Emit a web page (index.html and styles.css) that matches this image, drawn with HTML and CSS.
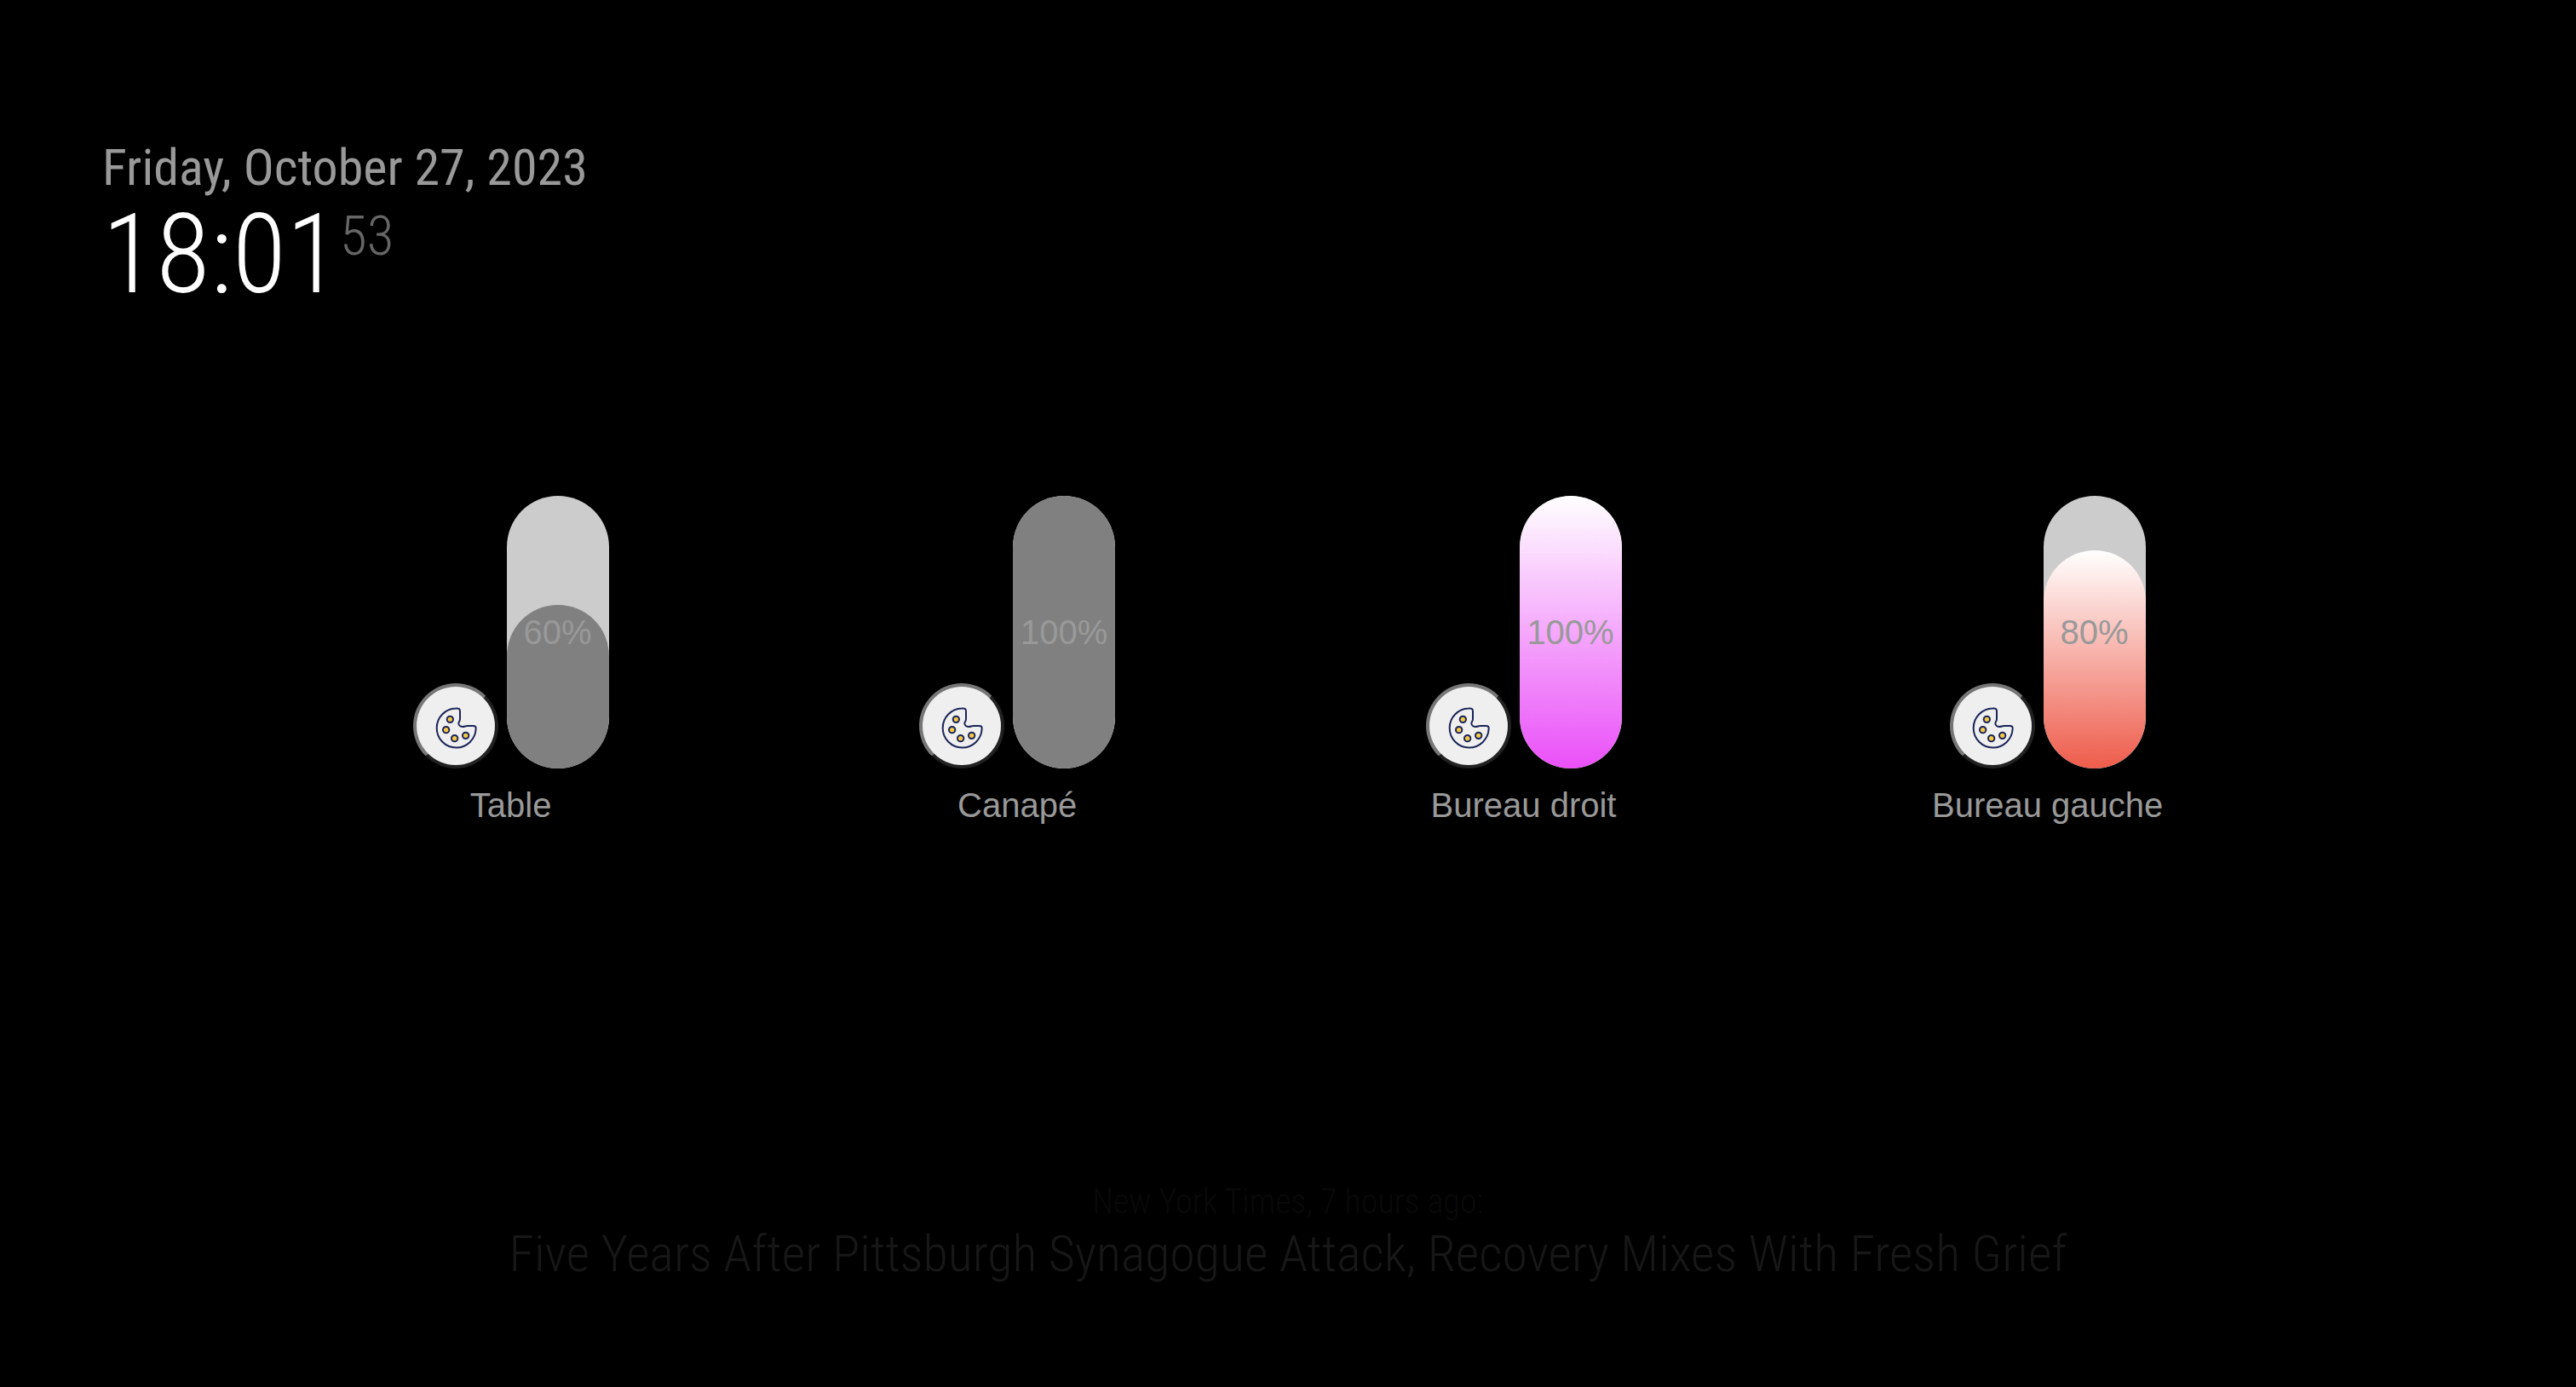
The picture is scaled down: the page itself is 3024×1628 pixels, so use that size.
FILE: index.html
```
<!DOCTYPE html>
<html lang="en">
<head>
<meta charset="utf-8">
<meta name="viewport" content="width=device-width, initial-scale=1">
<title>Mirror</title>
<link rel="stylesheet" href="styles.css">
</head>
<body>
<svg class="defs" aria-hidden="true">
  <symbol id="palette" viewBox="84 89 162 162">
    <path class="palette-body" d="M165 108.500A69 69 0 1 0 236 180C237 173 233 170 227 170H206C199 170 197 173 190 173C182 173 175 168 175 161C175 155 180 154 180 147V119C180 110 175 107 165 108.500Z"/>
    <circle class="palette-dot" cx="145" cy="147" r="11"/>
    <circle class="palette-dot" cx="131" cy="184" r="11"/>
    <circle class="palette-dot" cx="161" cy="214" r="11"/>
    <circle class="palette-dot" cx="200" cy="204" r="11"/>
  </symbol>
</svg>
<header class="clock">
  <div class="date">Friday, October 27, 2023</div>
  <div class="time">18:01<sup class="seconds">53</sup></div>
</header>
<main class="lights">
  <section class="light">
    <div class="controls">
      <button class="color-button" type="button" aria-label="Table color"><svg class="icon"><use href="#palette"/></svg></button>
      <div class="slider">
        <div class="fill off" style="height:60%"></div>
        <output class="percent" for="table">60%</output>
        <input class="range" id="table" type="range" min="0" max="100" value="60">
      </div>
    </div>
    <label class="name" for="table">Table</label>
  </section>
  <section class="light">
    <div class="controls">
      <button class="color-button" type="button" aria-label="Canapé color"><svg class="icon"><use href="#palette"/></svg></button>
      <div class="slider">
        <div class="fill off" style="height:100%"></div>
        <output class="percent" for="canape">100%</output>
        <input class="range" id="canape" type="range" min="0" max="100" value="100">
      </div>
    </div>
    <label class="name" for="canape">Canapé</label>
  </section>
  <section class="light">
    <div class="controls">
      <button class="color-button" type="button" aria-label="Bureau droit color"><svg class="icon"><use href="#palette"/></svg></button>
      <div class="slider">
        <div class="fill pink" style="height:100%"></div>
        <output class="percent" for="droit">100%</output>
        <input class="range" id="droit" type="range" min="0" max="100" value="100">
      </div>
    </div>
    <label class="name" for="droit">Bureau droit</label>
  </section>
  <section class="light">
    <div class="controls">
      <button class="color-button" type="button" aria-label="Bureau gauche color"><svg class="icon"><use href="#palette"/></svg></button>
      <div class="slider">
        <div class="fill red" style="height:80%"></div>
        <output class="percent" for="gauche">80%</output>
        <input class="range" id="gauche" type="range" min="0" max="100" value="80">
      </div>
    </div>
    <label class="name" for="gauche">Bureau gauche</label>
  </section>
</main>
<footer class="news">
  <div class="source">New York Times, 7 hours ago:</div>
  <div class="headline">Five Years After Pittsburgh Synagogue Attack, Recovery Mixes With Fresh Grief</div>
</footer>
</body>
</html>
```
FILE: styles.css
```
* {
  box-sizing: border-box;
}

html {
  background: #000;
}

body {
  display: flex;
  flex-direction: column;
  min-height: 100vh;
  margin: 0;
  padding: 162px 120px 120px;
  color: #999;
  font-family: "Roboto Condensed", Roboto, sans-serif;
  font-weight: 400;
}

.defs {
  position: absolute;
  width: 0;
  height: 0;
}

.clock {
  margin-bottom: 216px;
}

.date {
  font-size: 60px;
  line-height: 70px;
}

.time {
  color: #fff;
  font-size: 130px;
  font-weight: 300;
  line-height: 134px;
}

.seconds {
  color: #666;
  font-size: 65px;
  line-height: 32px;
}

.lights {
  display: flex;
  justify-content: space-around;
  align-self: center;
  width: 80vw;
  font-family: "Liberation Sans", Arial, sans-serif;
  font-size: 40px;
  line-height: 46px;
}

.light {
  display: flex;
  flex-direction: column;
  align-items: center;
  gap: 20px;
}

.controls {
  display: flex;
  align-items: flex-end;
  gap: 10px;
}

.color-button {
  display: grid;
  place-items: center;
  width: 100px;
  height: 100px;
  padding: 0;
  border: 4px solid;
  border-color: #767676 #212121 #212121 #767676;
  border-radius: 50%;
  background: #efefef;
}

.icon {
  width: 54px;
  height: 54px;
}

.palette-body {
  fill: none;
  stroke: #1b2459;
  stroke-width: 6;
}

.palette-dot {
  fill: #f4ca45;
  stroke: #1b2459;
  stroke-width: 6;
}

.slider {
  display: grid;
  width: 120px;
  height: 320px;
  overflow: hidden;
  border-radius: 60px;
  background: #ccc;
}

.fill,
.percent,
.range {
  grid-area: 1 / 1;
}

.fill {
  align-self: end;
  border-radius: 60px;
}

.off {
  background: #808080;
}

.pink {
  background: linear-gradient(#fff, #ea50f8);
}

.red {
  background: linear-gradient(#fff, #ee5c4b);
}

.percent {
  place-self: center;
}

.range {
  width: 120px;
  height: 320px;
  margin: 0;
  opacity: 0;
  writing-mode: vertical-lr;
  direction: rtl;
}

.news {
  margin-top: auto;
  font-weight: 300;
  text-align: center;
}

.source {
  color: #090909;
  font-size: 40px;
  line-height: 50px;
}

.headline {
  color: #171717;
  font-size: 60px;
  line-height: 72px;
}
```
